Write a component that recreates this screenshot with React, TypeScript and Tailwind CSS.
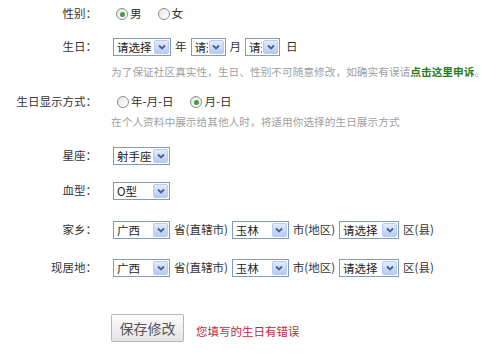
import React from 'react';

const font = "font-['SimSun','Noto_Sans_CJK_SC',sans-serif]";

function Sel({ text, className }: { text: string; className: string }) {
  return (
    <div className={`flex h-[18px] shrink-0 border border-[#7f9db9] bg-white ${className}`}>
      <span className="flex-1 overflow-hidden whitespace-nowrap pl-[3px] text-[11.5px] leading-[16px] text-[#222]">
        {text}
      </span>
      <span className="m-[1px] flex w-[15px] items-center justify-center rounded-[2px] border border-[#b8cbf5] bg-gradient-to-b from-[#e2ebfe] to-[#b7cbf6]">
        <svg width="8" height="6" viewBox="0 0 8 6">
          <path d="M1 1.5 L4 4.5 L7 1.5" fill="none" stroke="#4d6185" strokeWidth="1.8" />
        </svg>
      </span>
    </div>
  );
}

function Radio({ checked, label }: { checked?: boolean; label: string }) {
  return (
    <span className="flex items-center">
      <span className="flex h-[12px] w-[12px] items-center justify-center rounded-full border border-[#8c8c8c] bg-gradient-to-br from-[#e6e6e6] to-white">
        {checked && <span className="h-[5px] w-[5px] rounded-full bg-[#3c9f3c]" />}
      </span>
      <span className="ml-[2px] text-[11.5px] text-[#333]">{label}</span>
    </span>
  );
}

function Row({ label, children, className = '' }: { label: string; children: React.ReactNode; className?: string }) {
  return (
    <div className={`flex h-[18px] items-center ${className}`}>
      <div className="w-[97px] shrink-0 text-right text-[11.5px] text-[#333]">{label}</div>
      <div className="ml-[16px] flex items-center">{children}</div>
    </div>
  );
}

export default function App() {
  return (
    <div className={`h-[355px] w-[500px] overflow-hidden bg-white pt-[5px] ${font}`}>
      <Row label="性别：">
        <span className="ml-[3px]" />
        <Radio checked label="男" />
        <span className="ml-[16px]" />
        <Radio label="女" />
      </Row>

      <Row label="生日：" className="mt-[15px]">
        <Sel text="请选择" className="w-[58px]" />
        <span className="mx-[4px] text-[11.5px] text-[#333]">年</span>
        <Sel text="请选择" className="w-[35px]" />
        <span className="mx-[4px] text-[11.5px] text-[#333]">月</span>
        <Sel text="请选择" className="w-[35px]" />
        <span className="ml-[6px] text-[11.5px] text-[#333]">日</span>
      </Row>
      <div className="ml-[111px] mt-[8px] whitespace-nowrap text-[10.7px] leading-[16px] text-[#a0a0a0]">
        为了保证社区真实性，生日、性别不可随意修改，如确实有误请
        <span className="font-bold text-[#2e7d1e]">点击这里申诉</span>。
      </div>

      <Row label="生日显示方式：" className="mt-[13px]">
        <span className="ml-[4px]" />
        <Radio label="年-月-日" />
        <span className="ml-[17px]" />
        <Radio checked label="月-日" />
      </Row>
      <div className="ml-[111px] mt-[3px] whitespace-nowrap text-[10.7px] leading-[16px] text-[#a0a0a0]">
        在个人资料中展示给其他人时，将适用你选择的生日展示方式
      </div>

      <Row label="星座：" className="mt-[17px]">
        <Sel text="射手座" className="w-[57px]" />
      </Row>

      <Row label="血型：" className="mt-[17px]">
        <Sel text="O型" className="w-[57px]" />
      </Row>

      <Row label="家乡：" className="mt-[21px]">
        <Sel text="广西" className="w-[57px]" />
        <span className="mx-[4px] text-[11.5px] text-[#333]">省(直辖市)</span>
        <Sel text="玉林" className="w-[57px]" />
        <span className="mx-[4px] text-[11.5px] text-[#333]">市(地区)</span>
        <Sel text="请选择" className="w-[60px]" />
        <span className="ml-[4px] text-[11.5px] text-[#333]">区(县)</span>
      </Row>

      <Row label="现居地：" className="mt-[20px]">
        <Sel text="广西" className="w-[57px]" />
        <span className="mx-[4px] text-[11.5px] text-[#333]">省(直辖市)</span>
        <Sel text="玉林" className="w-[57px]" />
        <span className="mx-[4px] text-[11.5px] text-[#333]">市(地区)</span>
        <Sel text="请选择" className="w-[60px]" />
        <span className="ml-[4px] text-[11.5px] text-[#333]">区(县)</span>
      </Row>

      <div className="ml-[111px] mt-[37px] flex items-end">
        <button className="h-[28px] w-[73px] rounded-[2px] border border-[#b5b5b5] bg-gradient-to-b from-[#fdfdfd] to-[#e3e3e3] text-[14px] text-[#555]">
          保存修改
        </button>
        <span className="mb-[2px] ml-[12px] text-[11.5px] text-[#c0283a]">您填写的生日有错误</span>
      </div>
    </div>
  );
}
